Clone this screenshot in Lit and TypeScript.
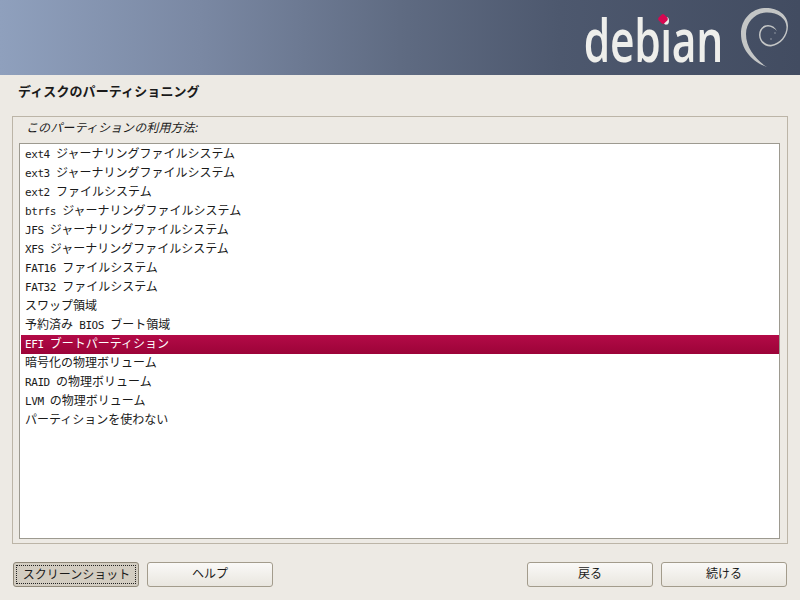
import { LitElement, html, css } from "lit";
import { customElement } from "lit/decorators.js";

const ROWS = [
  "ext4 ジャーナリングファイルシステム",
  "ext3 ジャーナリングファイルシステム",
  "ext2 ファイルシステム",
  "btrfs ジャーナリングファイルシステム",
  "JFS ジャーナリングファイルシステム",
  "XFS ジャーナリングファイルシステム",
  "FAT16 ファイルシステム",
  "FAT32 ファイルシステム",
  "スワップ領域",
  "予約済み BIOS ブート領域",
  "EFI ブートパーティション",
  "暗号化の物理ボリューム",
  "RAID の物理ボリューム",
  "LVM の物理ボリューム",
  "パーティションを使わない",
];

const runs = (text: string) =>
  text
    .split(/([\x20-\x7e]+)/)
    .filter((s) => s)
    .map((s) =>
      /^[\x20-\x7e]/.test(s) ? html`<span class="lat">${s}</span>` : html`<span>${s}</span>`
    );

@customElement("app-root")
export class AppRoot extends LitElement {
  static styles = css`
    :host {
      display: flex;
      flex-direction: column;
      width: 800px;
      height: 600px;
      overflow: hidden;
      background: #edeae4;
      color: #1a1a1a;
      font-family: "DejaVu Sans", "Noto Sans CJK JP", sans-serif;
      font-size: 12px;
    }
    .banner {
      flex: none;
      height: 75px;
      display: flex;
      justify-content: flex-end;
      align-items: flex-start;
      background: linear-gradient(90deg, #8fa0bd 0%, #7a88a3 25%, #5f6b82 50%, #4d586e 70%, #424c61 100%);
    }
    .brand {
      position: relative;
      flex: none;
      height: 75px;
      margin-right: 7px;
    }
    .word {
      display: block;
      font-family: "Open Sans", sans-serif;
      font-weight: 600;
      font-size: 60px;
      line-height: 75px;
      color: #eeeeeb;
      transform: translateY(1.5px) scaleX(0.71);
      transform-origin: right top;
      letter-spacing: -0.5px;
    }
    .dot {
      position: absolute;
      right: 56px;
      top: 15px;
      width: 8px;
      height: 8px;
      background: #d70751;
      border-radius: 2px;
      transform: rotate(45deg);
    }
    .swirl {
      flex: none;
      width: 70px;
      height: 75px;
    }
    .title {
      flex: none;
      height: 41px;
      padding: 9px 0 0 18px;
      box-sizing: border-box;
      font-size: 13px;
      font-weight: 700;
      line-height: 16px;
      letter-spacing: 0.1px;
    }
    .frame {
      flex: none;
      margin-left: 12px;
      width: 776px;
      height: 428px;
      box-sizing: border-box;
      border: 1px solid #bcb5a7;
      padding: 3px 7px 4px 6px;
      display: flex;
      flex-direction: column;
    }
    .legend {
      flex: none;
      height: 23px;
      padding-left: 7px;
      font-style: italic;
      line-height: 16px;
      letter-spacing: 0.1px;
    }
    .list {
      flex: 1;
      background: #fff;
      border: 1px solid #9d9a90;
      padding: 1px 0 1px 1px;
    }
    .row {
      height: 19px;
      line-height: 15px;
      padding-left: 4px;
      font-family: "Noto Sans CJK JP", sans-serif;
      font-size: 12px;
      white-space: pre;
    }
    .lat {
      font-family: "DejaVu Sans Mono", monospace;
      font-size: 11px;
      letter-spacing: -0.42px;
    }
    .row.on {
      background: linear-gradient(180deg, #b30a47 0%, #9c0338 100%);
      color: #fff;
    }
    .actions {
      flex: 1;
      display: flex;
      justify-content: space-between;
      padding: 18px 13px 0;
    }
    .group {
      display: flex;
      gap: 8px;
    }
    .btn {
      width: 126px;
      height: 25px;
      box-sizing: border-box;
      border: 1px solid #a39c8c;
      border-radius: 3px;
      background: linear-gradient(180deg, #faf9f7 0%, #e9e6df 100%);
      font-size: 12px;
      line-height: 23px;
      text-align: center;
      color: #1a1a1a;
    }
    .btn.focus {
      background: #d3cdc1;
      padding: 2px;
      border-color: #8f8878;
    }
    .btn.focus span {
      display: block;
      border: 1px dotted #222;
      line-height: 18px;
      height: 19px;
      box-sizing: border-box;
      white-space: nowrap;
      padding-left: 1px;
    }
  `;

  render() {
    return html`
      <div class="banner">
        <div class="brand">
          <span class="word">debian</span>
          <span class="dot"></span>
        </div>
        <svg class="swirl" viewBox="0 0 70 75">
          <path
            fill="#c4c6c6"
            d="M37 67C22 62 11 49 11 34C11 18 23 8 36 8C48 8 58 15 58 26C58 36 51 45 41 46.5C34 47 29 41 29 35C29 29 33 25 38 25C42 25 45 27 47 31C44 28 41 26.5 38 26.5C34 26.5 30.5 30 30.5 35C30.5 41 36 45 41 44.8C50 43.5 56.5 35 56.5 27C56.5 18 47 12 36 12.5C25 13 16 22 16 34C16 48 26 60 37 67Z"
          />
          <circle cx="45" cy="33" r="0.8" fill="#9aa0a8" />
          <circle cx="41" cy="39" r="0.8" fill="#9aa0a8" />
        </svg>
      </div>
      <div class="title">ディスクのパーティショニング</div>
      <div class="frame">
        <div class="legend">このパーティションの利用方法:</div>
        <div class="list">
          ${ROWS.map(
            (r, i) => html`<div class="row ${i === 10 ? "on" : ""}">${runs(r)}</div>`
          )}
        </div>
      </div>
      <div class="actions">
        <div class="group">
          <div class="btn focus"><span>スクリーンショット</span></div>
          <div class="btn">ヘルプ</div>
        </div>
        <div class="group">
          <div class="btn">戻る</div>
          <div class="btn">続ける</div>
        </div>
      </div>
    `;
  }
}
